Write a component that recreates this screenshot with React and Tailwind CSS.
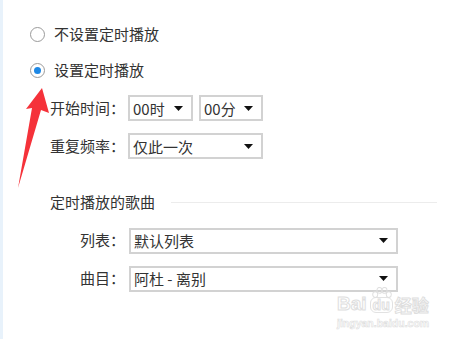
import React from 'react';

const Caret = () => (
    <svg width="9" height="5" viewBox="0 0 9 5" className="shrink-0">
        <path d="M0 0 H9 L4.5 5 Z" fill="#111" />
    </svg>
);

const Select = ({ value, className }) => (
    <div className={`flex items-center justify-between h-[26px] border-2 border-[#d2d2d2] bg-white pl-[3px] pr-[8px] text-[15px] text-[#333] ${className}`}>
        <span className="leading-none">{value}</span>
        <Caret />
    </div>
);

const Radio = ({ checked, label }) => (
    <div className="flex items-center h-5">
        <div className="w-[15px] h-[15px] rounded-full border border-[#9a9a9a] flex items-center justify-center bg-white">
            {checked && <div className="w-[7px] h-[7px] rounded-full bg-[#1e88e5]"></div>}
        </div>
        <span className="ml-[9px] text-[15px] text-[#333]">{label}</span>
    </div>
);

const App = () => {
    return (
        <div
            className="relative w-[454px] h-[339px] bg-white overflow-hidden flex"
            style={{ fontFamily: '"Noto Sans CJK SC", "Noto Sans", sans-serif' }}
        >
            <div className="w-[3px] bg-[#e8f2fb] shrink-0"></div>

            <div className="flex-1 flex flex-col">
                {/* radio options */}
                <div className="flex flex-col gap-4 pl-[27px] pt-[24px]">
                    <Radio label="不设置定时播放" />
                    <Radio checked label="设置定时播放" />
                </div>

                {/* schedule fields */}
                <div className="flex flex-col gap-3 pl-[47px] mt-[15px] text-[15px] text-[#333]">
                    <div className="flex items-center">
                        <span className="w-[78px]">开始时间：</span>
                        <Select value="00时" className="w-[65px]" />
                        <Select value="00分" className="w-[64px] ml-[6px]" />
                    </div>
                    <div className="flex items-center">
                        <span className="w-[78px]">重复频率：</span>
                        <Select value="仅此一次" className="w-[135px]" />
                    </div>
                </div>

                {/* songs section */}
                <div className="flex items-center pl-[47px] pr-[17px] mt-[32px]">
                    <span className="text-[15px] text-[#333]">定时播放的歌曲</span>
                    <div className="flex-1 h-px bg-[#ececec] ml-[16px]"></div>
                </div>

                <div className="flex flex-col gap-3 pl-[77px] mt-[14px] text-[15px] text-[#333]">
                    <div className="flex items-center">
                        <span className="w-[49px]">列表：</span>
                        <Select value="默认列表" className="w-[269px]" />
                    </div>
                    <div className="flex items-center">
                        <span className="w-[49px]">曲目：</span>
                        <Select value="阿杜 - 离别" className="w-[269px]" />
                    </div>
                </div>
            </div>

            {/* red annotation arrow */}
            <svg className="absolute left-0 top-0" width="60" height="200" viewBox="0 0 60 200">
                <path d="M42 88 L49 113 L41 110 L18 188 L32 108 L26 109 Z" fill="#f5323a" />
            </svg>

            {/* watermark */}
            <div className="absolute left-[337px] top-[294px] flex flex-col items-start select-none">
                <div
                    className="flex items-end text-[19px] font-bold leading-none text-white"
                    style={{ WebkitTextStroke: '1px #dedede', fontFamily: 'Arial, "Liberation Sans", sans-serif' }}
                >
                    <span>Bai</span>
                    <span className="relative ml-[3px] px-[2px] text-[14px] rounded-[6px] border border-[#e2e2e2]">
                        du
                        <svg className="absolute -top-[11px] left-0" width="22" height="11" viewBox="0 0 26 13">
                            <g fill="none" stroke="#e0e0e0" strokeWidth="1.2">
                                <ellipse cx="5" cy="9" rx="3" ry="3.5" />
                                <ellipse cx="10" cy="4" rx="3" ry="3.5" />
                                <ellipse cx="16" cy="4" rx="3" ry="3.5" />
                                <ellipse cx="21" cy="9" rx="3" ry="3.5" />
                            </g>
                        </svg>
                    </span>
                    <span className="ml-[2px] text-[17px]" style={{ fontFamily: '"Noto Sans CJK SC", sans-serif' }}>经验</span>
                </div>
                <span
                    className="mt-[5px] text-[10.5px] font-bold text-white leading-none"
                    style={{ WebkitTextStroke: '0.6px #dedede', fontFamily: 'Arial, "Liberation Sans", sans-serif' }}
                >
                    jingyan.baidu.com
                </span>
            </div>
        </div>
    );
};

export default App;
